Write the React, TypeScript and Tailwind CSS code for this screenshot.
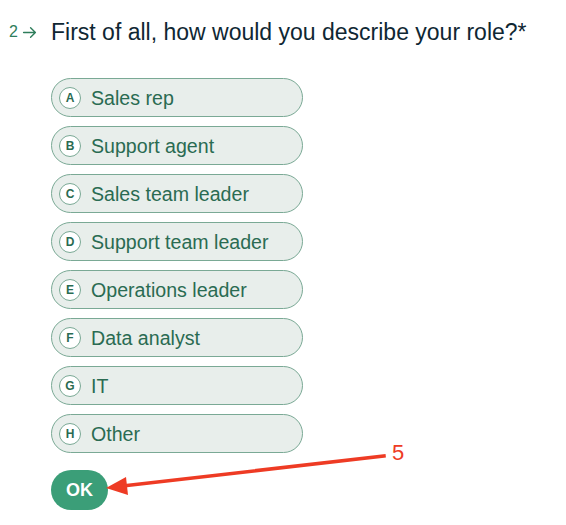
import React from "react";

const options = [
  { key: "A", label: "Sales rep" },
  { key: "B", label: "Support agent" },
  { key: "C", label: "Sales team leader" },
  { key: "D", label: "Support team leader" },
  { key: "E", label: "Operations leader" },
  { key: "F", label: "Data analyst" },
  { key: "G", label: "IT" },
  { key: "H", label: "Other" },
];

export default function App() {
  return (
    <div className="relative w-[566px] h-[525px] bg-white overflow-hidden" style={{ fontFamily: '"Helvetica Neue", "Liberation Sans", Arial, sans-serif' }}>
      <div className="flex items-center pt-[18px] pl-[9px]">
        <span className="flex items-center gap-[4px] w-[42px] text-[16px] text-[#2e7d5b]">
          2
          <svg width="15" height="15" viewBox="0 0 14 14" fill="none" stroke="#2e7d5b" strokeWidth="1.3" strokeLinecap="round" strokeLinejoin="round">
            <path d="M1.5 7h11M8 2.5 12.5 7 8 11.5" />
          </svg>
        </span>
        <h1 className="text-[23px] leading-[28px] text-[#0f2733]">First of all, how would you describe your role?*</h1>
      </div>

      <div className="flex flex-col gap-[9px] pl-[51px] mt-[32px]">
        {options.map((o) => (
          <div key={o.key} className="flex items-center gap-[10px] w-[252px] h-[39px] rounded-full border border-[#7aa995] bg-[#e8eeeb] pl-[7px]">
            <span className="flex items-center justify-center w-[22px] h-[22px] rounded-full bg-white border border-[#7aa995] text-[12px] font-bold text-[#2a6b52]">
              {o.key}
            </span>
            <span className="text-[19.6px] leading-[24px] pt-[1px] text-[#2a6b52]">{o.label}</span>
          </div>
        ))}
      </div>

      <div className="pl-[51px] mt-[17px]">
        <button className="w-[57px] h-[40px] rounded-full bg-[#3b9e78] text-white text-[18px] font-bold">OK</button>
      </div>

      {/* annotation */}
      <svg className="absolute left-0 top-0" width="566" height="525" viewBox="0 0 566 525">
        <line x1="384" y1="456" x2="122" y2="486" stroke="#ee3b24" strokeWidth="3.5" strokeLinecap="square" />
        <path d="M106 488 L126 477 L128 495 Z" fill="#ee3b24" />
      </svg>
      <span className="absolute left-[392px] top-[440px] text-[22px] leading-[26px] text-[#ee3b24]">5</span>
    </div>
  );
}
